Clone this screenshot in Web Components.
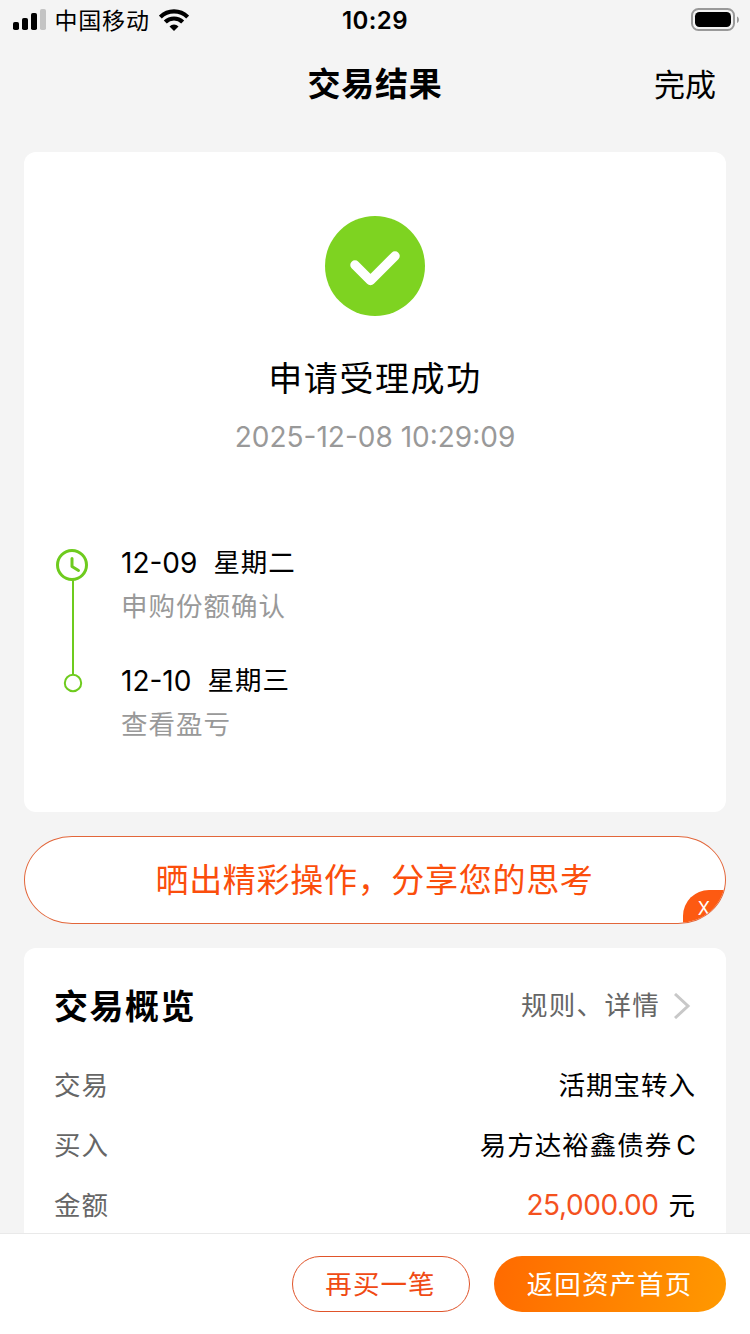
<!DOCTYPE html>
<html lang="zh-CN">
<head>
<meta charset="utf-8">
<title>交易结果</title>
<style>
html,body{margin:0;height:100%;overflow:hidden;background:#f4f4f4}
</style>
</head>
<body>
<result-page></result-page>
<script>
const define = (name, html) => {
  const t = document.createElement('template');
  t.innerHTML = '<style>*{box-sizing:border-box}</style>' + html;
  customElements.define(name, class extends HTMLElement {
    constructor() {
      super();
      this.attachShadow({ mode: 'open' }).append(t.content.cloneNode(true));
    }
  });
};

define('status-bar', `
<style>
:host{display:grid;grid-template-columns:1fr auto 1fr;align-items:center;height:40px;flex:none}
.left{display:flex;align-items:center;padding-left:13px}
.carrier{font-size:23px;letter-spacing:.8px;line-height:30px;margin:1px 0 0 8.500px}
.time{font-size:24px;font-weight:600;line-height:30px;letter-spacing:.4px;margin-top:2px}
svg{display:block}
.wifi{margin-left:9px}
.battery{justify-self:end;margin-right:11px}
</style>
<div class="left">
 <svg width="33" height="22" viewBox="0 0 33 22"><rect x="0" y="13" width="6" height="8" rx="1.8"/><rect x="9" y="9" width="6" height="12" rx="1.8"/><rect x="18" y="4" width="6" height="17" rx="1.8"/><rect x="27" y="0" width="6" height="21" rx="1.8" fill="#c4c4c4"/></svg>
 <span class="carrier">中国移动</span>
 <svg class="wifi" width="30" height="22" viewBox="0 0 30 22"><g fill="none" stroke="#000" stroke-width="4.200"><path d="M1.300 8.100a19.400 19.400 0 0 1 27.400 0"/><path d="M6.300 13.100a12.300 12.300 0 0 1 17.400 0"/></g><path d="M15 22l-4.500-4.600a6.400 6.400 0 0 1 9 0z"/></svg>
</div>
<div class="time">10:29</div>
<svg class="battery" width="48" height="24" viewBox="0 0 48 24"><rect x="1" y="1" width="42" height="21" rx="6.500" fill="none" stroke="#999" stroke-width="2"/><rect x="4" y="4" width="36" height="15" rx="4.500"/><path d="M46 8.500c2.600 1 2.600 5.500 0 6.500z" fill="#999"/></svg>
`);

define('nav-bar', `
<style>
:host{display:grid;grid-template-columns:1fr auto 1fr;align-items:center;height:88px;padding:0 34px;flex:none}
.title{grid-column:2;font-size:33px;font-weight:600;letter-spacing:.7px;line-height:48px}
.action{justify-self:end;font-size:31px;line-height:48px;padding-top:2px}
</style>
<span class="title"><slot></slot></span><span class="action"><slot name="action"></slot></span>
`);

define('panel-card', `
<style>:host{display:block;background:#fff;border-radius:12px;flex:none}</style><slot></slot>
`);

define('success-hero', `
<style>
:host{display:flex;flex-direction:column;align-items:center;padding-top:64px}
svg{display:block}
.title{font-size:34px;letter-spacing:1.6px;line-height:52px;margin-top:37px}
.time{font-size:28px;line-height:36px;color:#999;margin-top:14px}
</style>
<svg width="100" height="100" viewBox="0 0 100 100"><circle cx="50" cy="50" r="50" fill="#7ed321"/><path d="M30 49L45.500 64.500L70 40" fill="none" stroke="#fff" stroke-width="9.500" stroke-linecap="round" stroke-linejoin="round"/></svg>
<div class="title"><slot></slot></div><div class="time"><slot name="time"></slot></div>
`);

define('time-line', `
<style>
:host{display:flex;padding:90px 32px 0;gap:32px}
svg{display:block;margin-top:4px;flex:none}
</style>
<svg width="33" height="144" viewBox="0 0 33 144" fill="none" stroke="#6ecb1e"><circle cx="16" cy="16" r="14.500" stroke-width="3"/><path d="M16 9.500v8l6.500 4" stroke-width="3" stroke-linecap="round" stroke-linejoin="round"/><path d="M17 31v95" stroke-width="2"/><circle cx="17" cy="134" r="8.200" stroke-width="2"/></svg>
<div><slot></slot></div>
`);

define('time-step', `
<style>
:host{display:block;height:118px}
.head{display:flex;gap:16px;line-height:36px}
.date{font-size:28px}
.day{font-size:26.500px;letter-spacing:1px;margin-top:-1px}
.note{font-size:26.500px;letter-spacing:1px;line-height:36px;color:#999;margin-top:7px}
</style>
<div class="head"><span class="date"><slot name="date"></slot></span><span class="day"><slot name="day"></slot></span></div>
<div class="note"><slot></slot></div>
`);

define('share-banner', `
<style>
:host{display:flex;align-items:center;justify-content:center;position:relative;height:88px;flex:none;border:1px solid #e2663a;border-radius:48px/44px;background:#fff;color:#fb4e0c;overflow:hidden;font-size:33px;letter-spacing:.7px}
.label{padding:0 1px 5px 0}
.close{position:absolute;right:0;bottom:0;width:42px;height:33px;background:#fd5a12;border-radius:26px 0 0 0;color:#fff;font-size:18px;line-height:37px;letter-spacing:0;text-align:center}
</style>
<span class="label"><slot></slot></span><span class="close">X</span>
`);

define('section-head', `
<style>
:host{display:flex;justify-content:space-between;align-items:center;height:52px}
.title{font-size:34px;font-weight:700;letter-spacing:1.500px;padding-bottom:4px}
.link{display:flex;align-items:center;gap:14px;font-size:26.500px;letter-spacing:1.300px;color:#666;padding-right:4px}
.text{padding-bottom:5px}
svg{display:block}
</style>
<span class="title"><slot></slot></span>
<span class="link"><span class="text"><slot name="link"></slot></span><svg width="18" height="26" viewBox="0 0 18 26" fill="none" stroke="#c8c8c8" stroke-width="3"><path d="M1 1l13 12L1 25"/></svg></span>
`);

define('info-row', `
<style>
:host{display:flex;justify-content:space-between;align-items:center;height:60px;font-size:26.500px;letter-spacing:1px}
.label{color:#666}
</style>
<span class="label"><slot name="label"></slot></span><span><slot></slot></span>
`);

define('amount-value', `
<style>:host{display:inline-block;font-size:28px;letter-spacing:-.4px;color:#f4511e;line-height:36px;margin-right:10px}</style><slot></slot>
`);

define('share-class', `
<style>:host{display:inline-block;font-size:27px;letter-spacing:0;margin-left:4px}</style><slot></slot>
`);

define('pill-button', `
<style>
:host{display:flex;align-items:center;justify-content:center;width:178px;height:56px;padding:0 1px 4px 0;border:1px solid #e0542a;border-radius:28px;color:#f04a14;font-size:26.500px;letter-spacing:1.100px;background:#fff;box-sizing:border-box}
:host([primary]){width:232px;border:0;color:#fff;background:linear-gradient(100deg,#ff6a00,#ff9900)}
</style><span><slot></slot></span>
`);

define('action-bar', `
<style>
:host{display:flex;justify-content:flex-end;gap:24px;height:101px;flex:none;padding:22px 24px 0;background:#fff;border-top:1px solid #e9e9e9}
</style><slot></slot>
`);

define('result-page', `
<style>
:host{display:flex;flex-direction:column;width:750px;height:1334px;overflow:hidden;background:#f4f4f4;color:#000;font-family:Inter,"Noto Sans CJK SC",sans-serif}
main{flex:1;min-height:0;overflow:hidden;display:flex;flex-direction:column;gap:24px;padding:24px 24px 0}
.result{height:660px}
.overview{height:400px;padding:32px 30px 0}
.rows{margin-top:21px}
</style>
<status-bar></status-bar>
<nav-bar>交易结果<span slot="action">完成</span></nav-bar>
<main>
 <panel-card class="result">
  <success-hero>申请受理成功<span slot="time">2025-12-08 10:29:09</span></success-hero>
  <time-line>
   <time-step><span slot="date">12-09</span><span slot="day">星期二</span>申购份额确认</time-step>
   <time-step><span slot="date">12-10</span><span slot="day">星期三</span>查看盈亏</time-step>
  </time-line>
 </panel-card>
 <share-banner>晒出精彩操作，分享您的思考</share-banner>
 <panel-card class="overview">
  <section-head>交易概览<span slot="link">规则、详情</span></section-head>
  <div class="rows">
   <info-row><span slot="label">交易</span>活期宝转入</info-row>
   <info-row><span slot="label">买入</span>易方达裕鑫债券<share-class>C</share-class></info-row>
   <info-row><span slot="label">金额</span><amount-value>25,000.00</amount-value>元</info-row>
  </div>
 </panel-card>
</main>
<action-bar><pill-button>再买一笔</pill-button><pill-button primary>返回资产首页</pill-button></action-bar>
`);
</script>
</body>
</html>
